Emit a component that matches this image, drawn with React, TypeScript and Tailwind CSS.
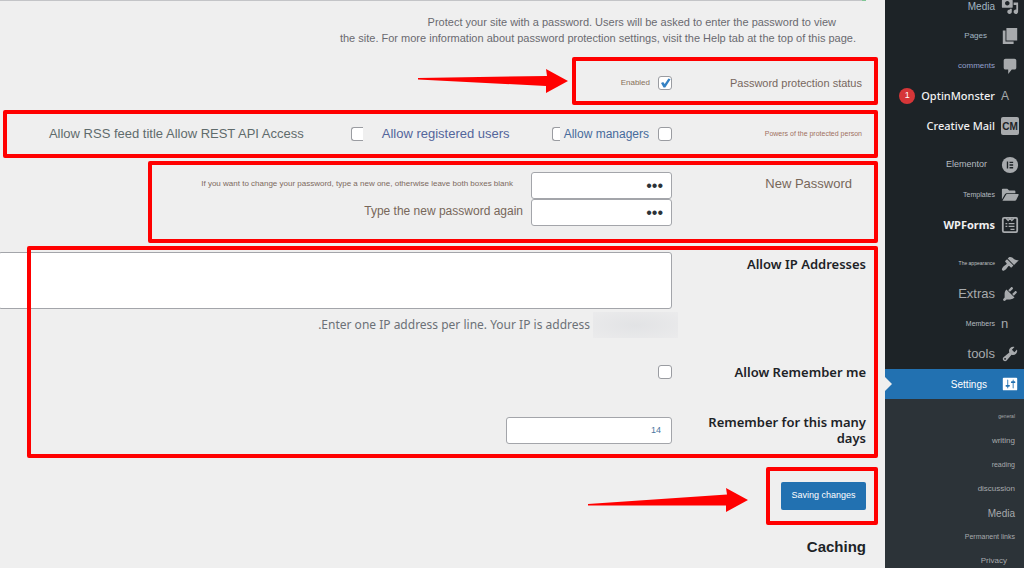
import { useState } from "react";
import type { ReactNode } from "react";
import clsx from "clsx";

/* ─── Types ──────────────────────────────────────────────────────────────── */
interface MenuItem {
  label: string;
  icon: ReactNode;
  text: string;
  badge?: string;
  active?: boolean;
}

interface SubMenuItem {
  label: string;
  text: string;
}

/* ─── Icons ──────────────────────────────────────────────────────────────── */
function Glyph({ d }: { d: string }) {
  return (
    <svg viewBox="0 0 20 20" className="h-[18px] w-[18px] fill-current" aria-hidden="true">
      <path d={d} />
    </svg>
  );
}

const MEDIA =
  "M13 11V4c0-.55-.45-1-1-1h-1.67L9 1H5L3.67 3H2c-.55 0-1 .45-1 1v7c0 .55.45 1 1 1h10c.55 0 1-.45 1-1zM7 4.5c1.38 0 2.5 1.12 2.5 2.5S8.38 9.5 7 9.5 4.5 8.38 4.5 7 5.62 4.5 7 4.5zM14 6h5v10.5c0 1.38-1.12 2.5-2.5 2.5S14 17.88 14 16.5s1.12-2.5 2.5-2.5c.17 0 .34.02.5.05V9h-3V6zm-4 8.05V13h2v3.5c0 1.38-1.12 2.5-2.5 2.5S7 17.88 7 16.5 8.12 14 9.5 14c.17 0 .34.02.5.05z";
const PAGES = "M6 15V1h12v14H6zm-1 1h9v3H2V4h3v12z";
const COMMENTS =
  "M5 2h10c1.1 0 2 .9 2 2v8c0 1.1-.9 2-2 2h-3l-4 5v-5H5c-1.1 0-2-.9-2-2V4c0-1.1.9-2 2-2z";
const FOLDER =
  "M1 4c0-.6.4-1 1-1h5l2 2h6c.6 0 1 .4 1 1v2H6.5c-.9 0-1.7.5-2.1 1.3L1 15V4zM6.5 9H19c.5 0 .8.5.6.9l-2.7 5.7c-.3.6-.8.9-1.4.9H1.600l4-6.900c.2-.4.500-.6.900-.6z";
const APPEARANCE =
  "M14.48 11.06L7.41 3.99l1.5-1.5c.5-.56 2.3-.47 3.51.32 1.21.8 1.43 1.28 2.91 2.1 1.18.64 2.45 1.26 4.45.85zm-.71.71L6.7 4.7 4.93 6.47c-.39.39-.39 1.02 0 1.41l1.06 1.06c.39.39.39 1.03 0 1.42-.6.6-1.43 1.11-2.21 1.69-.35.26-.7.53-1.01.84C1.43 14.23.4 16.08 1.4 17.07c.99 1 2.84-.03 4.18-1.36.31-.31.58-.66.85-1.02.57-.78 1.08-1.61 1.69-2.21.39-.39 1.02-.39 1.41 0l1.06 1.06c.39.39 1.02.39 1.41 0z";
const PLUGIN =
  "M13.11 4.36L9.87 7.6 8 5.73l3.24-3.24c.35-.34 1.05-.2 1.56.32.52.51.66 1.21.31 1.55zm-8 1.77l.91-1.12 9.01 9.01-1.19.84c-.71.71-2.63 1.16-3.82 1.16H6.14L4.9 17.26c-.59.59-1.54.59-2.12 0-.59-.58-.59-1.53 0-2.12l1.24-1.24v-3.88c0-1.13.4-3.19 1.09-3.89zm7.26 3.97l3.24-3.24c.34-.35 1.04-.21 1.55.31.52.51.66 1.21.31 1.55l-3.24 3.25z";
const TOOLS =
  "M16.68 9.77c-1.34 1.34-3.3 1.67-4.95.99l-5.41 6.52c-.99.99-2.59.99-3.58 0s-.99-2.59 0-3.57l6.52-5.42c-.68-1.65-.35-3.61.99-4.95 1.28-1.28 3.12-1.62 4.72-1.06l-2.89 2.89 2.82 2.82 2.86-2.87c.53 1.58.18 3.39-1.08 4.65zM3.81 16.21c.4.39 1.04.39 1.43 0 .4-.4.4-1.04 0-1.43-.39-.4-1.03-.4-1.43 0-.39.39-.39 1.03 0 1.43z";
const SETTINGS =
  "M18 16V4c0-.55-.45-1-1-1H3c-.55 0-1 .45-1 1v12c0 .55.45 1 1 1h14c.55 0 1-.45 1-1zM8 11h1c.55 0 1 .45 1 1s-.45 1-1 1H8v1.5c0 .28-.22.5-.5.5s-.5-.22-.5-.5V13H6c-.55 0-1-.45-1-1s.45-1 1-1h1V5.5c0-.28.22-.5.5-.5s.5.22.5.5V11zm5-2h-1c-.55 0-1-.45-1-1s.45-1 1-1h1V5.5c0-.28.22-.5.5-.5s.5.22.5.5V7h1c.55 0 1 .45 1 1s-.45 1-1 1h-1v5.5c0 .28-.22.5-.5.5s-.5-.22-.5-.5V9z";

function ElementorIcon() {
  return (
    <svg viewBox="0 0 20 20" className="h-[18px] w-[18px]" aria-hidden="true">
      <circle cx="10" cy="10" r="9" className="fill-current" />
      <path d="M7.2 6v8M9.500 7h4M9.500 10h4M9.500 13h4" stroke="#1d2327" strokeWidth="1.5" />
    </svg>
  );
}

function FormsIcon() {
  return (
    <svg viewBox="0 0 20 20" className="h-[18px] w-[18px]" fill="none" stroke="currentColor" aria-hidden="true">
      <rect x="2" y="2" width="16" height="16" rx="1.5" strokeWidth="2" />
      <path d="M5.5 2.500l2.500 2.500 2-2.500 2 2.500 2.500-2.500" strokeWidth="1.3" />
      <path d="M5 8.500h2M8.500 8.500H15M5 11.500h2M8.500 11.500H15M10.500 14.800H15" strokeWidth="1.4" />
    </svg>
  );
}

function MailIcon() {
  return (
    <span className="flex h-[18px] w-[18px] items-center justify-center rounded-[2px] bg-[#a7aaad] text-[10px] font-bold text-[#1d2327]">
      CM
    </span>
  );
}

/* ─── Menu data ──────────────────────────────────────────────────────────── */
const BRAND = "font-['Noto_Sans'] text-[11px] font-medium text-[#f0f0f1]";

const MENU_GROUPS: MenuItem[][] = [
  [
    { label: "Media", icon: <Glyph d={MEDIA} />, text: "text-[10px] text-[#a3b7c4]" },
    { label: "Pages", icon: <Glyph d={PAGES} />, text: "pr-2 text-[8px] text-[#a3b7c4]" },
    { label: "comments", icon: <Glyph d={COMMENTS} />, text: "text-[8px] text-[#94a0cc]" },
    {
      label: "OptinMonster",
      icon: <span className="text-[12px] text-[#a7aaad]">A</span>,
      text: BRAND,
      badge: "1",
    },
    { label: "Creative Mail", icon: <MailIcon />, text: BRAND },
  ],
  [
    { label: "Elementor", icon: <ElementorIcon />, text: "pr-2 text-[9px] text-[#b5bcc0]" },
    { label: "Templates", icon: <Glyph d={FOLDER} />, text: "text-[7px] text-[#b5bcc0]" },
    { label: "WPForms", icon: <FormsIcon />, text: "font-['Noto_Sans'] text-[11px] font-bold text-[#f0f0f1]" },
  ],
  [
    { label: "The appearance", icon: <Glyph d={APPEARANCE} />, text: "text-[5px] text-[#c0c3c5]" },
    { label: "Extras", icon: <Glyph d={PLUGIN} />, text: "text-[13px] text-[#a7aaad]" },
    {
      label: "Members",
      icon: <span className="text-[13px] text-[#a7aaad]">n</span>,
      text: "text-[7px] text-[#b5bcc0]",
    },
    { label: "tools", icon: <Glyph d={TOOLS} />, text: "text-[13px] text-[#a7aaad]" },
    { label: "Settings", icon: <Glyph d={SETTINGS} />, text: "pr-2 text-[10px] text-white", active: true },
  ],
];

const SUB_MENU: SubMenuItem[] = [
  { label: "general", text: "text-[5px]" },
  { label: "writing", text: "text-[8px]" },
  { label: "reading", text: "text-[7px]" },
  { label: "discussion", text: "text-[8px]" },
  { label: "Media", text: "text-[10px]" },
  { label: "Permanent links", text: "text-[7px]" },
  { label: "Privacy", text: "pr-2 text-[8px]" },
];

/* ─── Shared pieces ──────────────────────────────────────────────────────── */
/** Red frame laid over a part of the form */
function Highlight({ className, children }: { className?: string; children: ReactNode }) {
  return (
    <section className={clsx("relative", className)}>
      {children}
      <span className="pointer-events-none absolute inset-0 rounded-[2px] border-4 border-[#ff0000]" />
    </section>
  );
}

function Arrow({ points, className }: { points: string; className: string }) {
  return (
    <svg viewBox="0 0 160 24" className={clsx("h-6 w-40 shrink-0 fill-[#ff0000]", className)} aria-hidden="true">
      <polygon points={points} />
    </svg>
  );
}

const checkboxClass =
  "h-[14px] shrink-0 appearance-none border border-[#9a9ca1] bg-white";
const inputClass =
  "rounded-[3px] border border-[#a3a5aa] bg-white text-right outline-none";
const labelClass = "w-[206px] shrink-0 text-right";
const strongLabel = "pr-3 font-['Noto_Sans'] text-[13px] leading-4 font-semibold text-[#1d2327]";

/* ─── Sidebar ────────────────────────────────────────────────────────────── */
function Sidebar() {
  return (
    <nav className="w-[139px] shrink-0 bg-[#2c3338]" aria-label="Admin menu">
      <div className="-mt-[9px] flex flex-col gap-[9px] bg-[#1d2327]">
        {MENU_GROUPS.map((group, index) => (
          <ul key={index}>
            {group.map((item) => (
              <li key={item.label}>
                <a
                  href="#"
                  className={clsx(
                    "relative flex h-[30px] items-center justify-end gap-[6px] pr-[5px]",
                    item.active ? "bg-[#2271b1] text-white" : "text-[#a7aaad]"
                  )}
                >
                  {item.active && (
                    <svg viewBox="0 0 7 14" className="absolute top-2 left-0 h-[14px] w-[7px] fill-[#efefef]" aria-hidden="true">
                      <path d="M0 0l7 7-7 7z" />
                    </svg>
                  )}
                  {item.badge && (
                    <span className="flex h-4 w-4 items-center justify-center rounded-full bg-[#d63638] text-[9px] text-white">
                      {item.badge}
                    </span>
                  )}
                  <span className={item.text}>{item.label}</span>
                  <span className="flex w-[18px] shrink-0">{item.icon}</span>
                </a>
              </li>
            ))}
          </ul>
        ))}
      </div>

      <ul className="pt-[6px]">
        {SUB_MENU.map((item) => (
          <li key={item.label}>
            <a href="#" className="flex h-[24px] items-center justify-end pr-[9px] text-[#a7aaad]">
              <span className={item.text}>{item.label}</span>
            </a>
          </li>
        ))}
      </ul>
    </nav>
  );
}

/* ─── Settings form ──────────────────────────────────────────────────────── */
function SettingsForm() {
  const [enabled, setEnabled] = useState(true);

  return (
    <form className="flex min-w-0 flex-1 flex-col pr-[7px]">
      <div className="mr-[12px] h-px shrink-0 border-r-4 border-[#7fc795] bg-[#c3c4c7]" />
      <p className="pt-[13px] pr-[22px] text-right text-[11px] leading-4 text-[#6a6a70]">
        <span className="block pr-5">
          Protect your site with a password. Users will be asked to enter the password to view
        </span>
        the site. For more information about password protection settings, visit the Help tab at the top of this page.
      </p>

      {/* Status */}
      <div className="mt-[11px] flex items-center justify-end">
        <Arrow className="mr-1" points="10,9 10,10.500 138,17 138,24 160,12 138,0 139,7" />
        <Highlight className="flex h-12 w-[306px] items-center justify-end pt-1">
          <label htmlFor="enabled" className="mr-2 text-[8px] text-[#86705a]">
            Enabled
          </label>
          <span className="relative flex">
            <input
              id="enabled"
              type="checkbox"
              checked={enabled}
              onChange={(event) => setEnabled(event.target.checked)}
              className={clsx(checkboxClass, "w-[14px] rounded-[3px]")}
            />
            {enabled && (
              <svg viewBox="0 0 14 14" className="pointer-events-none absolute inset-0 h-[14px] w-[14px]" aria-hidden="true">
                <path d="M3 7l2.200-1 1.500 2L10.400 2.600l2.200.600-5.300 8.400H5.500z" fill="#3582c4" />
              </svg>
            )}
          </span>
          <span className={clsx(labelClass, "pr-4 text-[11px] text-[#77675e]")}>Password protection status</span>
        </Highlight>
      </div>

      {/* Permissions */}
      <Highlight className="mt-[5px] ml-[3px] flex h-12 items-center justify-end">
        <span className="mr-[47px] text-[13px] text-[#5f6b6c]">Allow RSS feed title Allow REST API Access</span>
        <input
          id="users"
          type="checkbox"
          className={clsx(checkboxClass, "mr-[19px] w-3 rounded-l-[3px] border-r-0")}
        />
        <label htmlFor="users" className="mr-[42px] text-[13px] text-[#53659b]">
          Allow registered users
        </label>
        <input
          id="feeds"
          type="checkbox"
          aria-label="Allow feeds"
          className={clsx(checkboxClass, "mr-1 w-2 rounded-l-[3px] border-r-0")}
        />
        <label htmlFor="managers" className="mr-[9px] text-[12px] text-[#476b9b]">
          Allow managers
        </label>
        <input id="managers" type="checkbox" className={clsx(checkboxClass, "w-[14px] rounded-[3px]")} />
        <span className={clsx(labelClass, "pr-4 text-[7px] text-[#a0705f]")}>Powers of the protected person</span>
      </Highlight>

      {/* New password */}
      <Highlight className="mt-[3px] ml-[148px] pt-[11px] pb-[17px]">
        <div className="flex items-center justify-end">
          <span className="mr-[18px] pb-[3px] text-[8px] text-[#7d6a60]">
            If you want to change your password, type a new one, otherwise leave both boxes blank
          </span>
          <input
            id="password"
            type="password"
            defaultValue="abc"
            className={clsx(inputClass, "h-[27px] w-[141px] pr-2 text-[16px] text-[#2c3338]")}
          />
          <label htmlFor="password" className={clsx(labelClass, "pr-[26px] pb-[3px] text-[13px] text-[#77675a]")}>
            New Password
          </label>
        </div>
        <div className="flex items-center justify-end pr-[206px]">
          <label htmlFor="again" className="mr-2 pb-[3px] text-[12px] text-[#77675a]">
            Type the new password again
          </label>
          <input
            id="again"
            type="password"
            defaultValue="abc"
            className={clsx(inputClass, "h-[27px] w-[141px] pr-2 text-[16px] text-[#2c3338]")}
          />
        </div>
      </Highlight>

      {/* Addresses and remember me */}
      <Highlight className="mt-[3px] ml-[27px] pt-[6px] pb-3">
        <div className="flex items-start">
          <textarea
            id="addresses"
            className={clsx(inputClass, "-ml-[29px] h-[57px] min-w-0 flex-1 resize-none")}
          />
          <label htmlFor="addresses" className={clsx(labelClass, strongLabel, "pt-1")}>
            Allow IP Addresses
          </label>
        </div>
        <div className="mt-[3px] flex items-center justify-end gap-[3px] pr-[200px]">
          <span className="font-['Noto_Sans'] text-[12px] text-[#6c7177]">
            .Enter one IP address per line. Your IP is address
          </span>
          <span className="h-[26px] w-[85px] bg-radial from-[#e2e3e5] to-[#ebebec]" />
        </div>
        <div className="mt-[26px] flex items-center justify-end">
          <input id="remember" type="checkbox" className={clsx(checkboxClass, "w-[14px] rounded-[3px]")} />
          <label htmlFor="remember" className={clsx(labelClass, strongLabel)}>
            Allow Remember me
          </label>
        </div>
        <div className="mt-[34px] flex items-center justify-end">
          <input
            id="days"
            type="text"
            defaultValue="14"
            className={clsx(inputClass, "h-[27px] w-[166px] pr-[10px] text-[9px] text-[#4a76a0]")}
          />
          <label htmlFor="days" className={clsx(labelClass, strongLabel, "pl-9")}>
            Remember for this many days
          </label>
        </div>
      </Highlight>

      {/* Submit */}
      <div className="mt-[9px] flex items-start justify-end">
        <Arrow className="mt-[21px] mr-[18px]" points="0,16 0,17.500 138,17.500 138,24 160,12 138,0 139,6.500" />
        <Highlight className="p-[15px] pr-3">
          <button type="button" className="block h-[28px] w-[85px] rounded-[2px] bg-[#2271b1] text-[9px] text-white">
            Saving changes
          </button>
        </Highlight>
      </div>

      <h2 className="mt-3 pr-3 text-right text-[15px] leading-5 font-bold text-[#1d2327]">Caching</h2>
    </form>
  );
}

export default function App() {
  return (
    <div className="flex h-screen overflow-hidden bg-[#efefef] font-['Liberation_Sans',sans-serif]">
      <SettingsForm />
      <Sidebar />
    </div>
  );
}
